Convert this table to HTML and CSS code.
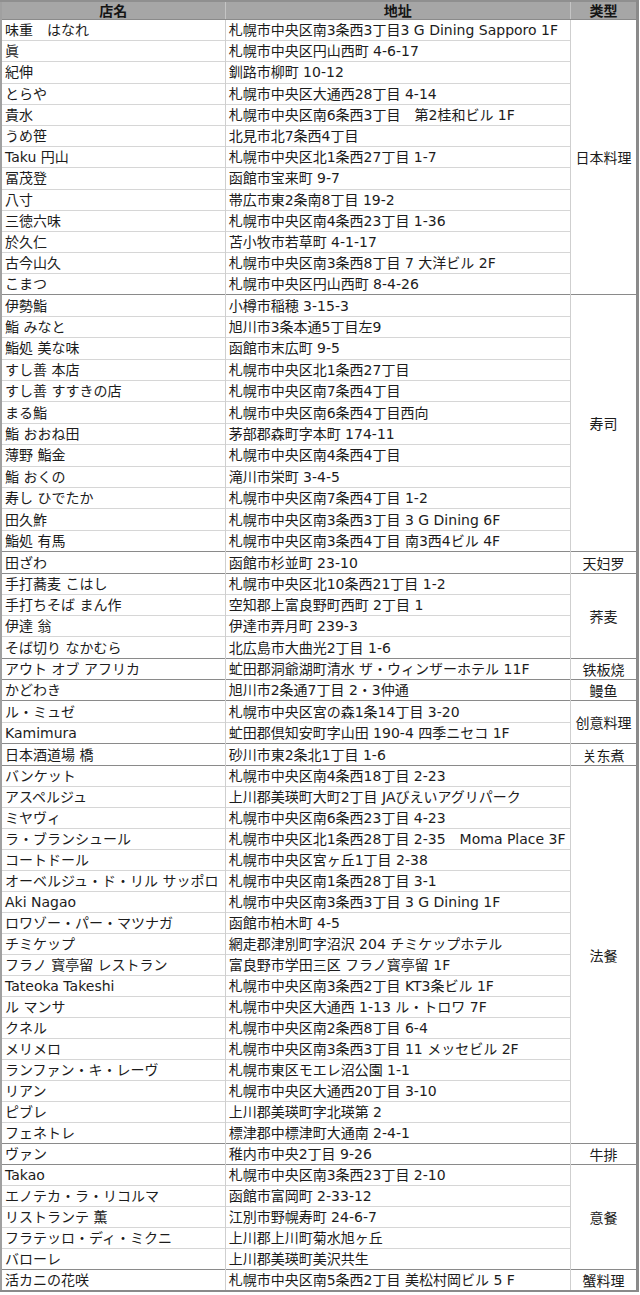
FILE: index.html
```html
<!DOCTYPE html>
<html lang="ja">
<head>
<meta charset="utf-8">
<title>店名一覧</title>
<link rel="stylesheet" href="styles.css">
</head>
<body>
<table class="list">
<colgroup><col class="c-name"><col class="c-addr"><col class="c-type"></colgroup>
<thead>
<tr><th>店名</th><th>地址</th><th>类型</th></tr>
</thead>
<tbody class="g-jp">
<tr class="gs"><td>味重　はなれ</td><td>札幌市中央区南3条西3丁目3 G Dining Sapporo 1F</td><td class="type" rowspan="13">日本料理</td></tr>
<tr><td>眞</td><td>札幌市中央区円山西町 4-6-17</td></tr>
<tr><td>紀伸</td><td>釧路市柳町 10-12</td></tr>
<tr><td>とらや</td><td>札幌市中央区大通西28丁目 4-14</td></tr>
<tr><td>貴水</td><td>札幌市中央区南6条西3丁目　第2桂和ビル 1F</td></tr>
<tr><td>うめ笹</td><td>北見市北7条西4丁目</td></tr>
<tr><td>Taku 円山</td><td>札幌市中央区北1条西27丁目 1-7</td></tr>
<tr><td>冨茂登</td><td>函館市宝来町 9-7</td></tr>
<tr><td>八寸</td><td>帯広市東2条南8丁目 19-2</td></tr>
<tr><td>三徳六味</td><td>札幌市中央区南4条西23丁目 1-36</td></tr>
<tr><td>於久仁</td><td>苫小牧市若草町 4-1-17</td></tr>
<tr><td>古今山久</td><td>札幌市中央区南3条西8丁目 7 大洋ビル 2F</td></tr>
<tr><td>こまつ</td><td>札幌市中央区円山西町 8-4-26</td></tr>
</tbody>
<tbody class="g-sushi">
<tr class="gs"><td>伊勢鮨</td><td>小樽市稲穂 3-15-3</td><td class="type" rowspan="12">寿司</td></tr>
<tr><td>鮨 みなと</td><td>旭川市3条本通5丁目左9</td></tr>
<tr><td>鮨処 美な味</td><td>函館市末広町 9-5</td></tr>
<tr><td>すし善 本店</td><td>札幌市中央区北1条西27丁目</td></tr>
<tr><td>すし善 すすきの店</td><td>札幌市中央区南7条西4丁目</td></tr>
<tr><td>まる鮨</td><td>札幌市中央区南6条西4丁目西向</td></tr>
<tr><td>鮨 おおね田</td><td>茅部郡森町字本町 174-11</td></tr>
<tr><td>薄野 鮨金</td><td>札幌市中央区南4条西4丁目</td></tr>
<tr><td>鮨 おくの</td><td>滝川市栄町 3-4-5</td></tr>
<tr><td>寿し ひでたか</td><td>札幌市中央区南7条西4丁目 1-2</td></tr>
<tr><td>田久鮓</td><td>札幌市中央区南3条西3丁目 3 G Dining 6F</td></tr>
<tr><td>鮨処 有馬</td><td>札幌市中央区南3条西4丁目 南3西4ビル 4F</td></tr>
</tbody>
<tbody class="g-tall">
<tr class="gs"><td>田ざわ</td><td>函館市杉並町 23-10</td><td class="type">天妇罗</td></tr>
</tbody>
<tbody class="g-soba">
<tr class="gs"><td>手打蕎麦 こはし</td><td>札幌市中央区北10条西21丁目 1-2</td><td class="type" rowspan="4">荞麦</td></tr>
<tr><td>手打ちそば まん作</td><td>空知郡上富良野町西町 2丁目 1</td></tr>
<tr><td>伊達 翁</td><td>伊達市弄月町 239-3</td></tr>
<tr><td>そば切り なかむら</td><td>北広島市大曲光2丁目 1-6</td></tr>
</tbody>
<tbody class="g-tall">
<tr class="gs"><td>アウト オブ アフリカ</td><td>虻田郡洞爺湖町清水 ザ・ウィンザーホテル 11F</td><td class="type">铁板烧</td></tr>
</tbody>
<tbody class="g-mid">
<tr class="gs"><td>かどわき</td><td>旭川市2条通7丁目 2・3仲通</td><td class="type">鳗鱼</td></tr>
</tbody>
<tbody class="g-sushi">
<tr class="gs"><td>ル・ミュゼ</td><td>札幌市中央区宮の森1条14丁目 3-20</td><td class="type" rowspan="2">创意料理</td></tr>
<tr><td>Kamimura</td><td>虻田郡倶知安町字山田 190-4 四季ニセコ 1F</td></tr>
</tbody>
<tbody class="g-tall">
<tr class="gs"><td>日本酒道場 橋</td><td>砂川市東2条北1丁目 1-6</td><td class="type">关东煮</td></tr>
</tbody>
<tbody class="g-fr">
<tr class="gs"><td>バンケット</td><td>札幌市中央区南4条西18丁目 2-23</td><td class="type" rowspan="18">法餐</td></tr>
<tr><td>アスペルジュ</td><td>上川郡美瑛町大町2丁目 JAびえいアグリパーク</td></tr>
<tr><td>ミヤヴィ</td><td>札幌市中央区南6条西23丁目 4-23</td></tr>
<tr><td>ラ・ブランシュール</td><td>札幌市中央区北1条西28丁目 2-35　Moma Place 3F</td></tr>
<tr><td>コートドール</td><td>札幌市中央区宮ヶ丘1丁目 2-38</td></tr>
<tr><td>オーベルジュ・ド・リル サッポロ</td><td>札幌市中央区南1条西28丁目 3-1</td></tr>
<tr><td>Aki Nagao</td><td>札幌市中央区南3条西3丁目 3 G Dining 1F</td></tr>
<tr><td>ロワゾー・パー・マツナガ</td><td>函館市柏木町 4-5</td></tr>
<tr><td>チミケップ</td><td>網走郡津別町字沼沢 204 チミケップホテル</td></tr>
<tr><td>フラノ 寳亭留 レストラン</td><td>富良野市学田三区 フラノ寳亭留 1F</td></tr>
<tr><td>Tateoka Takeshi</td><td>札幌市中央区南3条西2丁目 KT3条ビル 1F</td></tr>
<tr><td>ル マンサ</td><td>札幌市中央区大通西 1-13 ル・トロワ 7F</td></tr>
<tr><td>クネル</td><td>札幌市中央区南2条西8丁目 6-4</td></tr>
<tr><td>メリメロ</td><td>札幌市中央区南3条西3丁目 11 メッセビル 2F</td></tr>
<tr><td>ランファン・キ・レーヴ</td><td>札幌市東区モエレ沼公園 1-1</td></tr>
<tr><td>リアン</td><td>札幌市中央区大通西20丁目 3-10</td></tr>
<tr><td>ピブレ</td><td>上川郡美瑛町字北瑛第 2</td></tr>
<tr><td>フェネトレ</td><td>標津郡中標津町大通南 2-4-1</td></tr>
</tbody>
<tbody class="g-short">
<tr class="gs"><td>ヴァン</td><td>稚内市中央2丁目 9-26</td><td class="type">牛排</td></tr>
</tbody>
<tbody class="g-it">
<tr class="gs"><td>Takao</td><td>札幌市中央区南3条西23丁目 2-10</td><td class="type" rowspan="5">意餐</td></tr>
<tr><td>エノテカ・ラ・リコルマ</td><td>函館市富岡町 2-33-12</td></tr>
<tr><td>リストランテ 薫</td><td>江別市野幌寿町 24-6-7</td></tr>
<tr><td>フラテッロ・ディ・ミクニ</td><td>上川郡上川町菊水旭ヶ丘</td></tr>
<tr><td>バローレ</td><td>上川郡美瑛町美沢共生</td></tr>
</tbody>
<tbody class="g-mid">
<tr class="gs"><td>活カニの花咲</td><td>札幌市中央区南5条西2丁目 美松村岡ビル 5 F</td><td class="type">蟹料理</td></tr>
</tbody>
</table>
</body>
</html>
```
FILE: styles.css
```css
html, body {
  margin: 0;
  padding: 0;
  background: #ffffff;
}

.list {
  border-collapse: collapse;
  table-layout: fixed;
  width: 639px;
  font-family: "DejaVu Sans", "Noto Sans CJK JP", sans-serif;
  font-size: 14px;
  color: #1c1c1c;
  border-top: 2px solid #8f8f8f;
  border-left: 2px solid #a0a0a0;
  border-right: 3px solid #8a8a8a;
  border-bottom: 2px solid #8a8a8a;
}

.c-name { width: 224px; }
.c-addr { width: 345px; }
.c-type { width: 67px; }

.list th {
  background: #a6a6a6;
  font-weight: bold;
  text-align: center;
  height: 17px;
  padding: 0;
  line-height: 17px;
  color: #151515;
  font-family: "Noto Sans CJK SC", sans-serif;
  border-left: 1px solid #c4c4c4;
  border-bottom: 1px solid #8a8a8a;
}

.list td {
  height: 20.2px;
  padding: 0 0 0 3px;
  line-height: 20px;
  white-space: nowrap;
  overflow: hidden;
  vertical-align: middle;
  border-top: 1px solid #d6d6d6;
  border-left: 1px solid #cfcfcf;
}

/* row heights per section (match the reference's slightly uneven rows) */
.g-jp td { height: 20.2px; }
.g-sushi td { height: 20.4px; }
.g-tall td { height: 20.9px; }
.g-soba td { height: 20.15px; }
.g-mid td { height: 19.9px; }
.g-fr td { height: 19.85px; }
.g-short td { height: 19px; }
.g-it td { height: 19.7px; }

.list tr.gs td {
  border-top: 1px solid #8a8a8a;
}

.list td.type {
  text-align: center;
  padding: 0;
  font-family: "Noto Sans CJK SC", "Noto Sans", sans-serif;
  border-top: 1px solid #8a8a8a;
}
```
